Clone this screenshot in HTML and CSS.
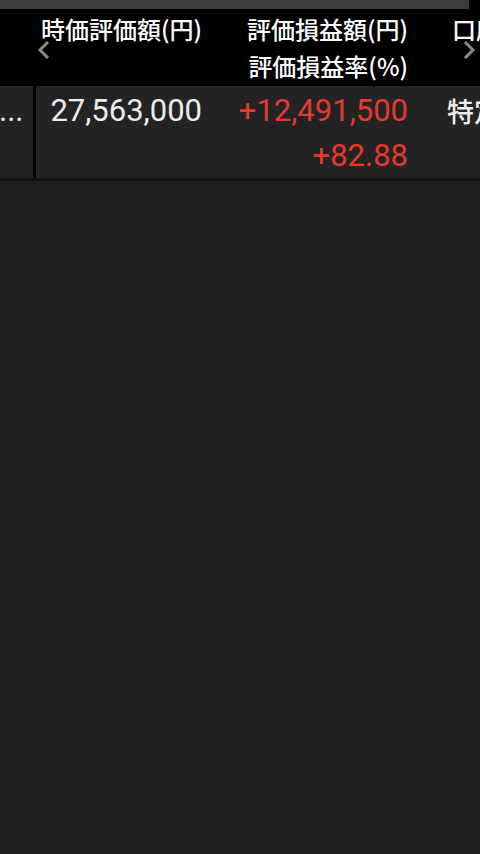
FILE: index.html
```html
<!DOCTYPE html>
<html lang="ja">
<head>
<meta charset="utf-8">
<link rel="stylesheet" href="styles.css">
</head>
<body>
<div class="screen">
  <div class="topbar"><div class="scroll-thumb"></div></div>
  <div class="table">
    <div class="head">
      <div class="c c0"></div>
      <div class="divider"></div>
      <div class="c c1"><div class="hl">時価評価額(円)</div></div>
      <div class="c c2"><div class="hl">評価損益額(円)</div><div class="hl">評価損益率(%)</div></div>
      <div class="c c3"><div class="hl">口座</div></div>
      <svg class="chev chev-left" width="14" height="20" viewBox="0 0 14 20"><path d="M11 2 L3 10 L11 18" fill="none" stroke="#8a8a8a" stroke-width="3"/></svg>
      <svg class="chev chev-right" width="14" height="20" viewBox="0 0 14 20"><path d="M3 2 L11 10 L3 18" fill="none" stroke="#8a8a8a" stroke-width="3"/></svg>
    </div>
    <div class="row">
      <div class="c c0"><span class="dots">...</span></div>
      <div class="divider"></div>
      <div class="c c1"><div class="vl">27,563,000</div></div>
      <div class="c c2"><div class="vl red">+12,491,500</div><div class="vl red">+82.88</div></div>
      <div class="c c3"><div class="vl jp">特定</div></div>
    </div>
  </div>
</div>
</body>
</html>
```
FILE: styles.css
```css
html, body {
  margin: 0;
  padding: 0;
  background: #1e1e1e;
}
.screen {
  width: 480px;
  height: 854px;
  background: #1e1e1e;
  overflow: hidden;
}
.topbar {
  height: 9px;
  background: #000;
}
.scroll-thumb {
  width: 469px;
  height: 9px;
  background: #3b3b3b;
}
.head, .row {
  display: flex;
  position: relative;
}
.head {
  background: #000;
  height: 77px;
}
.row {
  background: #232323;
  height: 92px;
  border-bottom: 3px solid #121212;
}
.c {
  box-sizing: border-box;
  overflow: hidden;
  white-space: nowrap;
}
.c0 { width: 33px; }
.divider { width: 3px; background: #000; }
.c1 { width: 176px; text-align: right; padding-right: 10px; }
.c2 { width: 206px; text-align: right; padding-right: 10px; }
.c3 { flex: 1; }
.head .c3 { padding-left: 34px; }
.row .c3 { padding-left: 29px; }
.hl {
  font-family: "Noto Sans CJK JP", sans-serif;
  font-weight: 500;
  font-size: 24px;
  line-height: 37px;
  color: #fff;
}
.head .c { padding-top: 1px; }
.row .c { padding-top: 2px; }
.vl {
  font-family: Roboto, "Noto Sans CJK JP", sans-serif;
  font-size: 31px;
  line-height: 45px;
  color: #ececec;
}
.vl.red { color: #e5392f; }
.vl.jp {
  font-family: "Noto Sans CJK JP", sans-serif;
  font-weight: 500;
  font-size: 27px;
}
.dots {
  display: block;
  font-family: Roboto, sans-serif;
  font-size: 31px;
  line-height: 45px;
  color: #ececec;
  margin-left: -1px;
  letter-spacing: 0;
}
.chev { position: absolute; top: 31px; }
.chev-left { left: 37px; }
.chev-right { left: 462px; }
```
